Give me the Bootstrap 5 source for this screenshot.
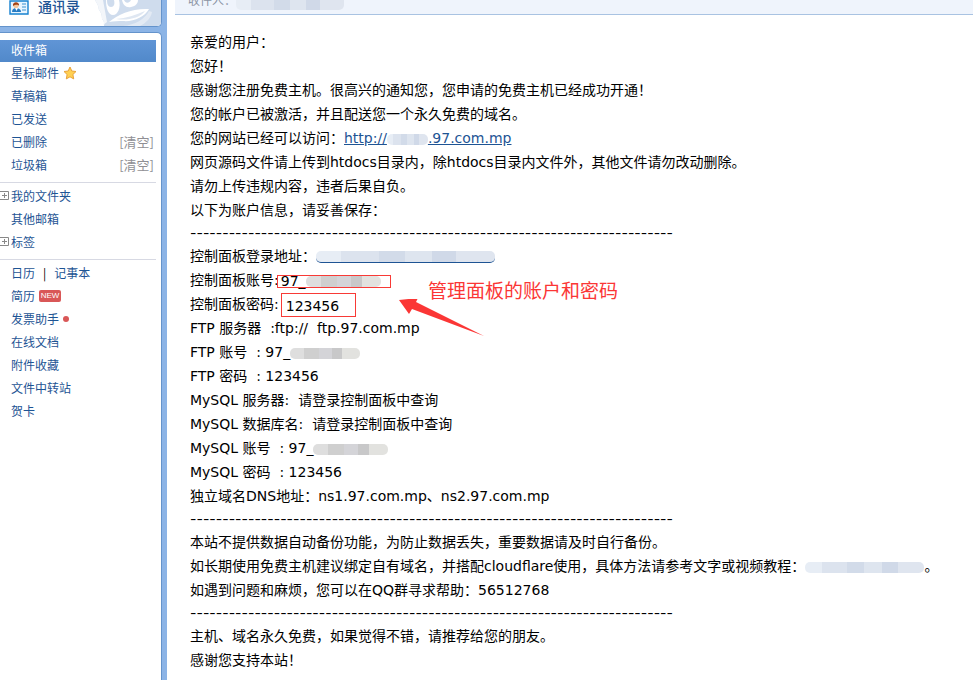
<!DOCTYPE html>
<html lang="zh-CN">
<head>
<meta charset="utf-8">
<meta name="viewport" content="width=device-width, initial-scale=1">
<title>收件箱</title>
<link href="https://cdn.jsdelivr.net/npm/bootstrap@5.3.0/dist/css/bootstrap.min.css" rel="stylesheet">
<style>
body{font:14px/24px "DejaVu Sans","Noto Sans CJK SC",sans-serif;color:#000;background:#fff;min-height:100vh;overflow:hidden}
a{text-decoration:none}
.side{width:167px;flex:none;background:#8cb4e6;font:12px/21px "Noto Sans CJK SC",sans-serif}
.side a{color:#1e5494}
.side-box{background:#fff;width:162px;border:1px solid #6493cb;border-left:0}
.side-top{height:27px;border-top:0;border-radius:0 0 5px 0;overflow:hidden}
.side-top a{font-size:14px;line-height:13px;font-weight:500;margin-left:10px}
.side-main{margin-top:5px;border-bottom:0;border-radius:0 5px 0 0;padding:7px 5px 0 0}
.side-main li{height:23px;padding-left:11px}
.side-main .chosen{background:linear-gradient(#6095d6,#5189ca);height:22px;line-height:19px}
.side-main .chosen a{color:#fff}
.side-main ul+ul{border-top:1px solid #d7d9e3;margin-top:5px;padding-top:2px}
.side-main .clear-link{color:#8f8f94;font-size:13px;margin-right:2px}
.side-main .icon-row{line-height:21px;padding-bottom:2px}
.side-main .folded{padding-left:0}
.expander{width:9px;height:9px;margin-right:2px;padding:0;border:0;background:none;line-height:0;flex:none}
.tag-new{background:#d95757;color:#fff;font:8px/12px "Liberation Sans",sans-serif;border-radius:2px;width:22px;height:12px;text-align:center;margin-left:4px}
.dot{width:6px;height:6px;border-radius:50%;background:#d95757;margin-left:4px}
.mail-head{height:15px;background:#eff4fc;border-bottom:1px solid #a9c3e2;color:#8a93a3;overflow:hidden;margin-left:8px;padding-left:13px}
.mail-head div{font-size:12px;line-height:18px;height:18px;margin-top:-8px}
.mail-text{padding:15px 20px 0 23px}
.mail-text p{margin:0;height:24px;white-space:nowrap}
.mail-text .rule{font:14px/22px "Inter",sans-serif;height:22px}
.mail-text a{color:#1e5494}
.mask{display:inline-block;height:11px;border-radius:5px;vertical-align:middle;background:linear-gradient(90deg,#dedede 0 20%,#cfcfcf 20% 42%,#d4d4d8 42% 60%,#c8c8c9 60% 75%,#e2e2df 75%)}
.mask-blue{background:linear-gradient(90deg,#e7edf5 0 14%,#dce3ee 14% 35%,#d2dbe9 35% 50%,#dee5ef 50% 65%,#d0d9e8 65% 78%,#dfe5ef 78%)}
.m-to{width:108px;height:16px}
.m-host{width:41px}
.m-url{width:179px;height:12px;border-bottom:1px solid #1e5494}
.m-user{width:75px}
.m-ftp{width:70px}
.m-guide{width:119px}
.boxed{display:inline-block;border:1px solid #f83a36;vertical-align:middle}
.box-user{width:114px;height:13px;line-height:11px;padding-left:3px;margin-left:-2px}
.box-pass{width:75px;height:24px;line-height:24px;padding-left:4px;margin:-3px 0 -3px 2px}
.note{left:209px;top:8px;color:#fb3635;font:19px/28px "Noto Sans CJK SC",sans-serif;white-space:nowrap}
.note span{display:block;margin-left:29px}
.note svg{display:block;margin-top:-5px}
</style>
<script src="https://cdn.jsdelivr.net/npm/bootstrap@5.3.0/dist/js/bootstrap.bundle.min.js"></script>
</head>
<body class="d-flex">
<nav class="side">
  <div class="side-box side-top d-flex justify-content-between">
    <div class="d-flex">
      <svg class="ms-2" width="22" height="16" viewBox="0 0 22 16"><path d="M2 1h18v13H2z" fill="#e8f5ff" stroke="#1681d0" stroke-width="1.4"/><path d="M4 12c0-3 2-4 4-4s5 1 5 4z" fill="#287cc4"/><path d="M7 8l1.500 3L10 8z" fill="#fff"/><circle cx="8" cy="5.500" r="2.600" fill="#f5c79c"/><path d="M5 6c-1-5 7-5 6 0-1-2-4-1-6 0z" fill="#a34316"/><path d="M14 4h4M14 7h4M14 10h4" stroke="#74b3df" stroke-width="1.300"/></svg>
      <a href="#contacts" class="ms-2">通讯录</a>
    </div>
    <svg width="66" height="26" viewBox="0 0 66 26"><path d="M0 0h66v26H9Q10 22 7 19 7 13 4 10 3 4 0 0z" fill="#cfdced"/><path d="M0 0h8l4 22-4 3Q10 22 7 19 7 13 4 10 3 4 0 0z" fill="#f3f6fa"/><path d="M11 0c0 8 2 15 7 15s8-8 6-15z" fill="#fff"/><path d="M12 0c0 4 1 7 4 7s4-3 3-7z" fill="#cfdced"/><path d="M27 0c1 5 4 8 9 7s7-4 7-7z" fill="#fff"/><path d="M29 0c1 3 5 4 7 0z" fill="#cfdced"/><path d="M14 22c9-8 24-14 40-13-4 8-16 13-26 12-5 0-9 0-14 1z" fill="#fff"/><path d="M21 19c10-1 20-4 29-8-5 7-18 10-29 8z" fill="#dfe7f2"/><path d="M28 26c12-1 22-7 26-15l3 1c-1 6-6 11-12 14z" fill="#e3eaf4"/></svg>
  </div>
  <div class="side-box side-main min-vh-100">
    <ul class="list-unstyled mb-0">
      <li class="chosen"><a href="#inbox">收件箱</a></li>
      <li class="icon-row d-flex align-items-center"><a href="#star">星标邮件</a><svg class="ms-1" width="14" height="14" viewBox="0 0 14 14"><path d="M7 1l1.800 4 4.200.5-3.100 3 .8 4.400L7 10.800 3.300 12.900l.8-4.400L1 5.500 5.200 5z" fill="#ffd052" stroke="#e9a23a"/></svg></li>
      <li><a href="#draft">草稿箱</a></li>
      <li><a href="#sent">已发送</a></li>
      <li class="d-flex justify-content-between"><a href="#deleted">已删除</a><a href="#clear-deleted" class="clear-link">[清空]</a></li>
      <li class="d-flex justify-content-between"><a href="#junk">垃圾箱</a><a href="#clear-junk" class="clear-link">[清空]</a></li>
    </ul>
    <ul class="list-unstyled mb-0">
      <li class="icon-row folded d-flex align-items-center"><button type="button" class="expander" aria-label="展开我的文件夹"><svg width="9" height="9" viewBox="0 0 9 9"><path d="M0 .5h8.500v8H0M2 4.500h5M4.500 2v5" fill="none" stroke="#888"/></svg></button><a href="#folders">我的文件夹</a></li>
      <li><a href="#other">其他邮箱</a></li>
      <li class="icon-row folded d-flex align-items-center"><button type="button" class="expander" aria-label="展开标签"><svg width="9" height="9" viewBox="0 0 9 9"><path d="M0 .5h8.500v8H0M2 4.500h5M4.500 2v5" fill="none" stroke="#888"/></svg></button><a href="#tags">标签</a></li>
    </ul>
    <ul class="list-unstyled mb-0">
      <li class="d-flex"><a href="#calendar">日历</a><span class="px-2">|</span><a href="#notes">记事本</a></li>
      <li class="icon-row d-flex align-items-center"><a href="#resume">简历</a><span class="tag-new">NEW</span></li>
      <li class="icon-row d-flex align-items-center"><a href="#invoice">发票助手</a><span class="dot"></span></li>
      <li><a href="#docs">在线文档</a></li>
      <li><a href="#attach">附件收藏</a></li>
      <li><a href="#transfer">文件中转站</a></li>
      <li><a href="#cards">贺卡</a></li>
    </ul>
  </div>
</nav>
<main class="flex-grow-1">
  <header class="mail-head"><div>收件人：<span class="mask mask-blue m-to"></span></div></header>
  <article class="mail-text">
    <p>亲爱的用户：</p>
    <p>您好！</p>
    <p>感谢您注册免费主机。很高兴的通知您，您申请的免费主机已经成功开通！</p>
    <p>您的帐户已被激活，并且配送您一个永久免费的域名。</p>
    <p>您的网站已经可以访问：<a href="#site" class="text-decoration-underline">http://<span class="mask mask-blue m-host"></span>.97.com.mp</a></p>
    <p>网页源码文件请上传到htdocs目录内，除htdocs目录内文件外，其他文件请勿改动删除。</p>
    <p>请勿上传违规内容，违者后果自负。</p>
    <p>以下为账户信息，请妥善保存：</p>
    <p class="rule">---------------------------------------------------------------------------</p>
    <p>控制面板登录地址：<a href="#panel" aria-label="控制面板"><span class="mask mask-blue m-url"></span></a></p>
    <div class="position-relative">
      <p>控制面板账号:<span class="boxed box-user">97_<span class="mask m-user"></span></span></p>
      <p>控制面板密码:<span class="boxed box-pass">123456</span></p>
      <div class="note position-absolute"><span>管理面板的账户和密码</span><svg width="86" height="40" viewBox="0 0 86 40"><path d="M0 1l19-2-2 4 68 34-72-27-3 5z" fill="#fb3635"/></svg></div>
    </div>
    <p>FTP 服务器&nbsp; :ftp://&nbsp; ftp.97.com.mp</p>
    <p>FTP 账号&nbsp; : 97_<span class="mask m-ftp"></span></p>
    <p>FTP 密码&nbsp; : 123456</p>
    <p>MySQL 服务器:&nbsp; 请登录控制面板中查询</p>
    <p>MySQL 数据库名:&nbsp; 请登录控制面板中查询</p>
    <p>MySQL 账号&nbsp; : 97_<span class="mask m-user"></span></p>
    <p>MySQL 密码&nbsp; : 123456</p>
    <p>独立域名DNS地址：ns1.97.com.mp、ns2.97.com.mp</p>
    <p class="rule">---------------------------------------------------------------------------</p>
    <p>本站不提供数据自动备份功能，为防止数据丢失，重要数据请及时自行备份。</p>
    <p>如长期使用免费主机建议绑定自有域名，并搭配cloudflare使用，具体方法请参考文字或视频教程：<span class="mask mask-blue m-guide"></span>。</p>
    <p>如遇到问题和麻烦，您可以在QQ群寻求帮助：56512768</p>
    <p class="rule">---------------------------------------------------------------------------</p>
    <p>主机、域名永久免费，如果觉得不错，请推荐给您的朋友。</p>
    <p>感谢您支持本站！</p>
  </article>
</main>
</body>
</html>
